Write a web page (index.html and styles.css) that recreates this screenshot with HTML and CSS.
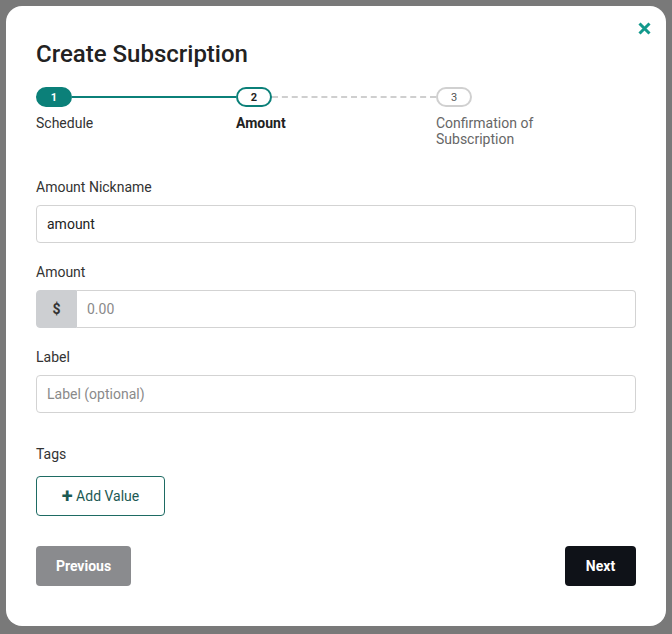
FILE: index.html
```html
<!DOCTYPE html>
<html>
<head>
    <title>Create Subscription</title>
    <link rel="stylesheet" href="styles.css">
</head>
<body>
<div class="modal">
    <button class="close-button" aria-label="Close">
        <svg width="13" height="13" viewBox="0 0 13 13">
            <path d="M1.5 1.5 L11.5 11.5 M11.5 1.5 L1.5 11.5" stroke="#12998c" stroke-width="3" fill="none"/>
        </svg>
    </button>

    <h1>Create Subscription</h1>

    <div class="stepper">
        <div class="step done">
            <div class="step-track">
                <span class="step-pill">1</span>
                <span class="step-line"></span>
            </div>
            <div class="step-label">Schedule</div>
        </div>
        <div class="step current">
            <div class="step-track">
                <span class="step-pill">2</span>
                <span class="step-line dashed"></span>
            </div>
            <div class="step-label">Amount</div>
        </div>
        <div class="step todo">
            <div class="step-track">
                <span class="step-pill">3</span>
            </div>
            <div class="step-label">Confirmation of Subscription</div>
        </div>
    </div>

    <form id="amount-form">
        <div class="field">
            <label for="nickname">Amount Nickname</label>
            <input type="text" id="nickname" value="amount">
        </div>

        <div class="field">
            <label for="amount">Amount</label>
            <div class="input-group">
                <span class="addon">$</span>
                <input type="text" id="amount" placeholder="0.00">
            </div>
        </div>

        <div class="field">
            <label for="label">Label</label>
            <input type="text" id="label" placeholder="Label (optional)">
        </div>

        <div class="field tags">
            <label>Tags</label>
            <button type="button" class="add-button"><span class="plus">+</span> Add Value</button>
        </div>

        <div class="actions">
            <button type="button" class="prev-button">Previous</button>
            <button type="submit" class="next-button">Next</button>
        </div>
    </form>
</div>
</body>
</html>
```

FILE: styles.css
```css
body {
    font-family: Roboto, "Liberation Sans", Arial, sans-serif;
    margin: 0;
    padding: 6px;
    background-color: #797979;
    color: #222;
}

.modal {
    position: relative;
    width: 660px;
    height: 620px;
    box-sizing: border-box;
    background-color: white;
    border-radius: 16px;
    padding: 34px 30px 0 30px;
}

.close-button {
    position: absolute;
    top: 16px;
    right: 15px;
    background: none;
    border: none;
    padding: 0;
    cursor: pointer;
}

h1 {
    margin: 0;
    font-size: 24px;
    font-weight: 500;
    line-height: 28px;
    color: #222;
}

.stepper {
    display: grid;
    grid-template-columns: 200px 200px 200px;
    margin-top: 19px;
}

.step-track {
    display: flex;
    align-items: center;
}

.step-pill {
    width: 36px;
    height: 20px;
    box-sizing: border-box;
    border-radius: 10px;
    border: 2px solid #0b8079;
    display: flex;
    align-items: center;
    justify-content: center;
    font-size: 11px;
    font-weight: 700;
    flex-shrink: 0;
}

.step-line {
    flex: 1;
    height: 2px;
    background-color: #0b8079;
}

.step-line.dashed {
    background: none;
    border-top: 2px dashed #cfcfcf;
    height: 0;
}

.done .step-pill {
    background-color: #0b8079;
    color: white;
}

.current .step-pill {
    color: #222;
}

.todo .step-pill {
    border-color: #d0d0d0;
    color: #555;
    font-weight: 400;
}

.step-label {
    margin-top: 8px;
    font-size: 14px;
    line-height: 16px;
    width: 115px;
    color: #333;
}

.current .step-label {
    font-weight: 700;
    color: #222;
}

.todo .step-label {
    color: #666;
}

form {
    margin-top: 31px;
}

.field {
    margin-bottom: 20px;
}

label {
    display: block;
    font-size: 14px;
    line-height: 18px;
    margin-bottom: 9px;
    color: #333;
}

input[type="text"] {
    width: 100%;
    height: 38px;
    box-sizing: border-box;
    padding: 0 10px;
    font-family: inherit;
    font-size: 14px;
    color: #222;
    border: 1px solid #d3d3d3;
    border-radius: 4px;
    outline: none;
}

input::placeholder {
    color: #8a8a8a;
}

.input-group {
    display: flex;
}

.addon {
    width: 41px;
    height: 38px;
    flex-shrink: 0;
    box-sizing: border-box;
    display: flex;
    align-items: center;
    justify-content: center;
    background-color: #cdcfd2;
    border: 1px solid #cdcfd2;
    border-radius: 4px 0 0 4px;
    font-size: 14px;
    font-weight: 700;
    color: #333;
}

.input-group input[type="text"] {
    border-radius: 0 4px 4px 0;
    border-left: none;
}

.tags {
    margin-top: 32px;
}

.tags label {
    margin-bottom: 13px;
}

.add-button {
    width: 129px;
    height: 40px;
    background: white;
    border: 1px solid #1e6b63;
    border-radius: 4px;
    color: #1c5a53;
    font-family: inherit;
    font-size: 14px;
    cursor: pointer;
}

.plus {
    font-size: 20px;
    font-weight: 700;
    vertical-align: -2px;
}

.actions {
    display: flex;
    justify-content: space-between;
    margin-top: 30px;
}

.prev-button,
.next-button {
    height: 40px;
    border: none;
    border-radius: 4px;
    color: white;
    font-family: inherit;
    font-size: 14px;
    font-weight: 700;
    cursor: pointer;
}

.prev-button {
    width: 95px;
    background-color: #8a8b8e;
}

.next-button {
    width: 71px;
    background-color: #0f1218;
}
```
